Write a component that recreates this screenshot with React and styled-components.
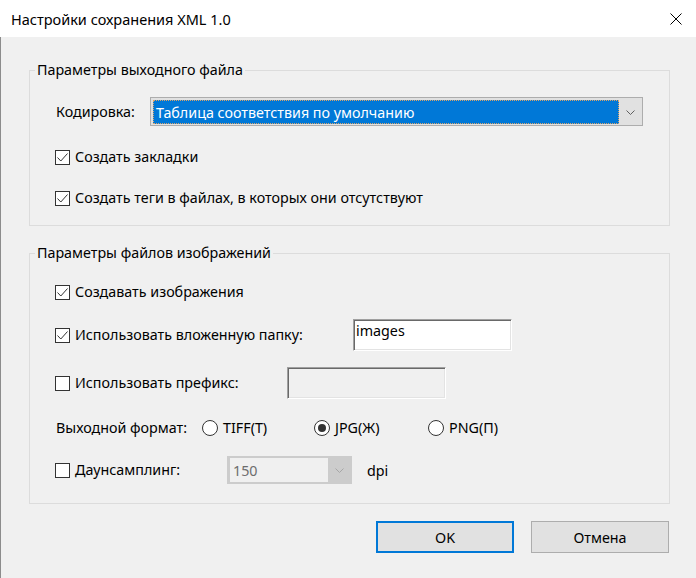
import React from 'react'
import styled, { createGlobalStyle } from 'styled-components'

const GlobalStyle = createGlobalStyle`
  body {
    margin: 0;
    background: #f0f0f0;
    font-family: "Noto Sans", "Open Sans", sans-serif;
    font-size: 14.3px;
    color: #000;
  }
`

const Window = styled.div`
  width: 696px;
  height: 578px;
  display: flex;
  flex-direction: column;
  background: #f0f0f0;
  overflow: hidden;
`

const TitleBar = styled.div`
  height: 37px;
  flex: none;
  background: #fff;
  display: flex;
  align-items: center;
  justify-content: space-between;
  padding: 0 14px 0 11px;
  font-size: 14.5px;
`

const Body = styled.div`
  flex: 1;
  border-left: 1px solid #8c8c8c;
  padding: 23px 26px 0 28px;
`

const Group = styled.fieldset`
  margin: ${p => p.$top || 0}px 0 0;
  padding: 0;
  border: 1px solid #dcdcdc;
  min-width: 0;
`

const Legend = styled.legend`
  margin-left: 5px;
  padding: 0 2px;
  line-height: 20px;
  height: 20px;
`

const GroupBody = styled.div`
  padding: 0 25px ${p => p.$bottom}px 25px;
  display: flex;
  flex-direction: column;
`

const Row = styled.div`
  display: flex;
  align-items: center;
  height: ${p => p.$h || 20}px;
  margin-top: ${p => p.$mt}px;
`

const Label = styled.span`
  flex: none;
  width: ${p => (p.$w ? p.$w + 'px' : 'auto')};
  padding-left: 1px;
  line-height: 20px;
  white-space: nowrap;
`

const CheckBox = styled.span`
  flex: none;
  box-sizing: border-box;
  width: 15px;
  height: 15px;
  border: 1px solid #333;
  background: #fff;
  display: flex;
  margin-right: 4px;
`

const CheckOption = styled.label`
  display: flex;
  align-items: center;
  width: ${p => (p.$w ? p.$w + 'px' : 'auto')};
  flex: none;
`

const RadioCircle = styled.span`
  flex: none;
  box-sizing: border-box;
  width: 16px;
  height: 16px;
  border-radius: 50%;
  border: 1px solid #333;
  background: #fff;
  display: flex;
  align-items: center;
  justify-content: center;
  margin-right: 4px;
  &::after {
    content: '';
    display: ${p => (p.$on ? 'block' : 'none')};
    width: 8px;
    height: 8px;
    border-radius: 50%;
    background: #333;
  }
`

const RadioOption = styled.label`
  display: flex;
  align-items: center;
  width: ${p => (p.$w ? p.$w + 'px' : 'auto')};
  flex: none;
`

const Combo = styled.div`
  box-sizing: border-box;
  width: ${p => p.$w}px;
  height: ${p => p.$h}px;
  display: flex;
  padding: ${p => (p.$disabled ? '1px 0 1px 2px' : '2px 0 1px 2px')};
  border: 1px solid ${p => (p.$disabled ? '#cccccc' : '#adadad')};
  background: ${p => (p.$disabled ? '#cccccc' : '#e1e1e1')};
`

const ComboValue = styled.div`
  flex: 1;
  display: flex;
  align-items: center;
  padding-left: 2px;
  box-sizing: border-box;
  white-space: nowrap;
  background: ${p => (p.$focus ? '#0078d7' : '#f0f0f0')};
  color: ${p => (p.$focus ? '#fff' : '#6d6d6d')};
  border: 1px ${p => (p.$focus ? 'dotted #d9a46a' : 'solid #f0f0f0')};
`

const ComboArrow = styled.div`
  flex: none;
  width: 23px;
  display: flex;
  align-items: center;
  justify-content: center;
`

const TextBox = styled.div`
  box-sizing: border-box;
  width: 159px;
  height: 32px;
  padding: 1px 2px;
  line-height: 20px;
  background: ${p => (p.$disabled ? '#f0f0f0' : '#fff')};
  border-style: solid;
  border-width: 1px;
  border-color: #a0a0a0 #fff #fff #a0a0a0;
  box-shadow: inset 1px 1px 0 #696969, inset -1px -1px 0 #e3e3e3;
`

const Units = styled.span`
  margin-left: 15px;
`

const ButtonRow = styled.div`
  display: flex;
  justify-content: flex-end;
  gap: 17px;
  margin-top: 17px;
  padding-right: 1px;
`

const Button = styled.button`
  box-sizing: border-box;
  width: 138px;
  height: 32px;
  margin: 0;
  font: inherit;
  color: #000;
  background: #e1e1e1;
  border: ${p => (p.$default ? '2px solid #0078d7' : '1px solid #adadad')};
`

const Check = ({ on }) => (
  <CheckBox>
    {on && (
      <svg width="13" height="13" viewBox="0 0 13 13">
        <path d="M1.5 6.5 L4.8 10 L11.5 2.5" fill="none" stroke="#333" strokeWidth="1" />
      </svg>
    )}
  </CheckBox>
)

const Chevron = ({ color }) => (
  <svg width="9" height="5" viewBox="0 0 9 5">
    <path d="M0.5 0.5 L4.5 4.5 L8.5 0.5" fill="none" stroke={color} strokeWidth="1" />
  </svg>
)

export default function App() {
  return (
    <Window>
      <GlobalStyle />
      <TitleBar>
        <span>Настройки сохранения XML 1.0</span>
        <svg width="12" height="12" viewBox="0 0 12 12">
          <path d="M0.5 0.5 L11.5 11.5 M11.5 0.5 L0.5 11.5" stroke="#000" strokeWidth="1" />
        </svg>
      </TitleBar>
      <Body>
        <Group>
          <Legend>Параметры выходного файла</Legend>
          <GroupBody $bottom={17}>
            <Row $mt={17} $h={29}>
              <Label $w={94}>Кодировка:</Label>
              <Combo $w={493} $h={29}>
                <ComboValue $focus>Таблица соответствия по умолчанию</ComboValue>
                <ComboArrow><Chevron color="#606060" /></ComboArrow>
              </Combo>
            </Row>
            <Row $mt={21}>
              <CheckOption><Check on /><Label>Создать закладки</Label></CheckOption>
            </Row>
            <Row $mt={21}>
              <CheckOption><Check on /><Label>Создать теги в файлах, в которых они отсутствуют</Label></CheckOption>
            </Row>
          </GroupBody>
        </Group>

        <Group $top={17}>
          <Legend>Параметры файлов изображений</Legend>
          <GroupBody $bottom={19}>
            <Row $mt={19}>
              <CheckOption><Check on /><Label>Создавать изображения</Label></CheckOption>
            </Row>
            <Row $mt={17} $h={32}>
              <CheckOption $w={298}><Check on /><Label>Использовать вложенную папку:</Label></CheckOption>
              <TextBox>images</TextBox>
            </Row>
            <Row $mt={16} $h={32}>
              <CheckOption $w={232}><Check /><Label>Использовать префикс:</Label></CheckOption>
              <TextBox $disabled />
            </Row>
            <Row $mt={19}>
              <Label $w={146}>Выходной формат:</Label>
              <RadioOption $w={112}><RadioCircle /><Label>TIFF(T)</Label></RadioOption>
              <RadioOption $w={114}><RadioCircle $on /><Label>JPG(Ж)</Label></RadioOption>
              <RadioOption><RadioCircle /><Label>PNG(П)</Label></RadioOption>
            </Row>
            <Row $mt={18} $h={28}>
              <CheckOption $w={172}><Check /><Label>Даунсамплинг:</Label></CheckOption>
              <Combo $w={125} $h={28} $disabled>
                <ComboValue>150</ComboValue>
                <ComboArrow><Chevron color="#a6a6a6" /></ComboArrow>
              </Combo>
              <Units>dpi</Units>
            </Row>
          </GroupBody>
        </Group>

        <ButtonRow>
          <Button $default>OK</Button>
          <Button>Отмена</Button>
        </ButtonRow>
      </Body>
    </Window>
  )
}
